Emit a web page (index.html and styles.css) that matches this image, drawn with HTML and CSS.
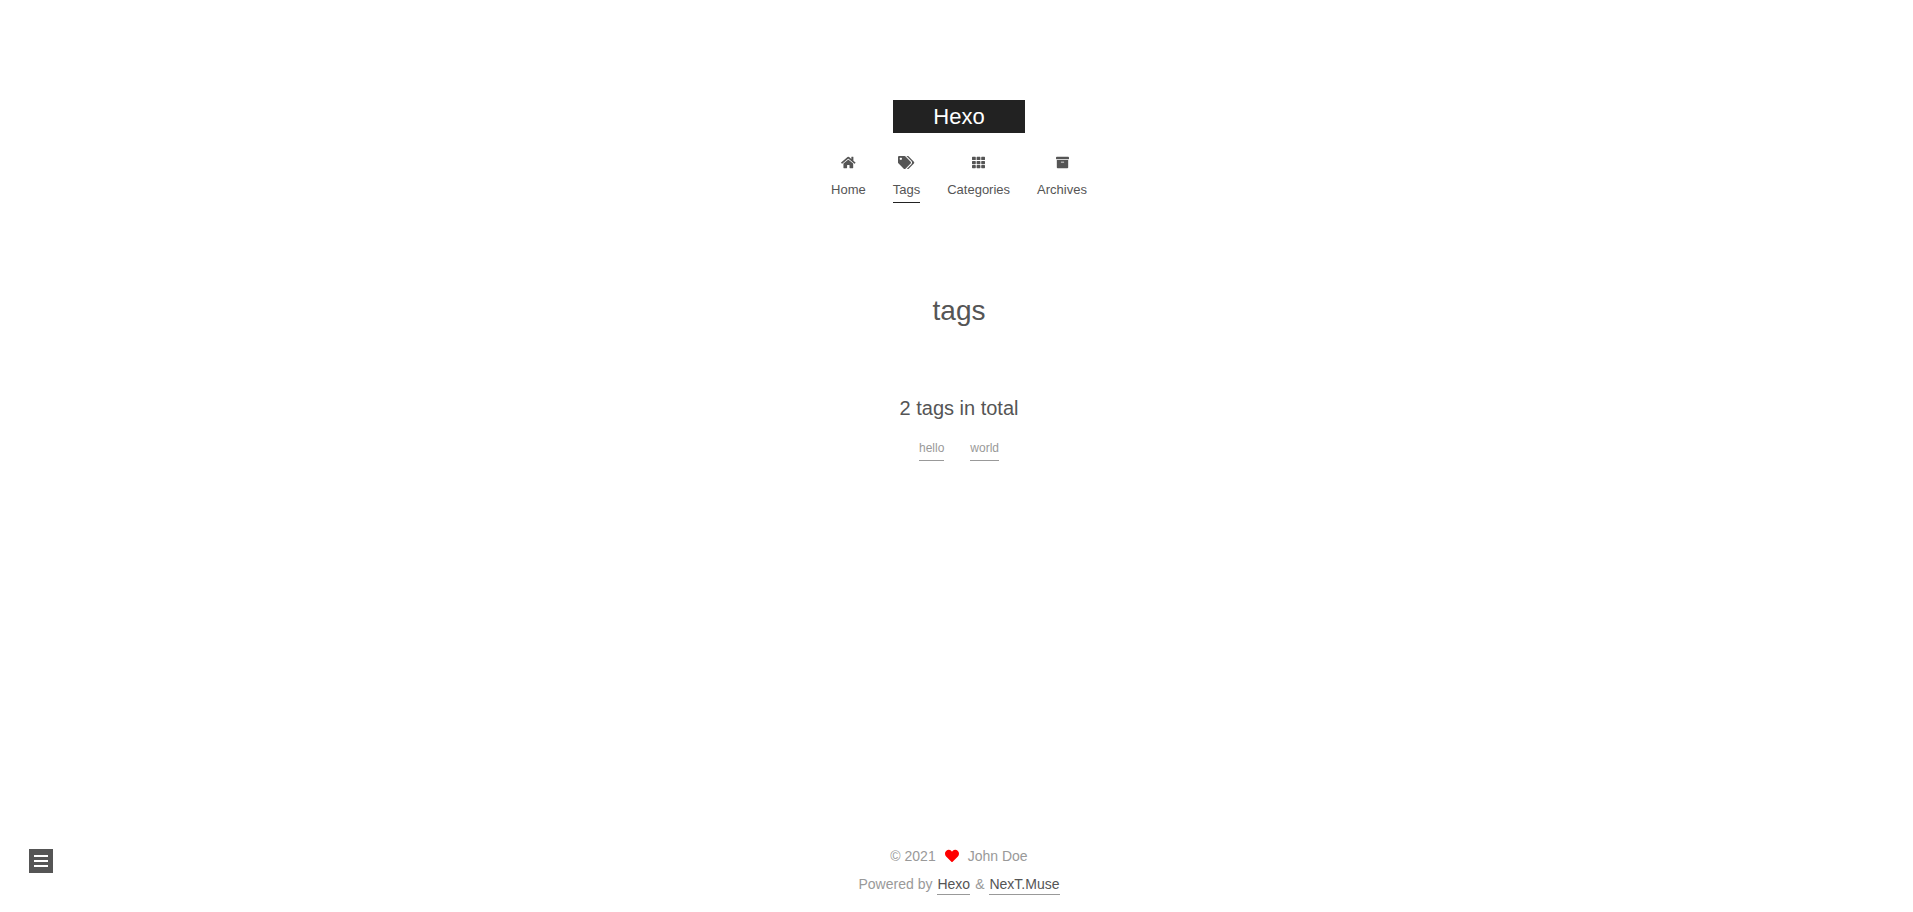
FILE: index.html
```html
<!DOCTYPE html>
<html lang="en">
<head>
<meta charset="utf-8">
<meta name="viewport" content="width=device-width, initial-scale=1">
<title>tags | Hexo</title>
<link rel="stylesheet" href="styles.css">
</head>
<body>
<header class="header">
  <a class="brand" href="#">Hexo</a>
  <nav class="menu" aria-label="Main">
    <a class="menu-item" href="#">
      <svg class="icon icon-home" viewBox="0 0 576 512" aria-hidden="true"><path d="M280.37 148.26L96 300.11V464a16 16 0 0 0 16 16l112.06-.29a16 16 0 0 0 15.92-16V368a16 16 0 0 1 16-16h64a16 16 0 0 1 16 16v95.64a16 16 0 0 0 16 16.05L464 480a16 16 0 0 0 16-16V300L295.67 148.26a12.19 12.19 0 0 0-15.3 0zM571.6 251.47L488 182.56V44.05a12 12 0 0 0-12-12h-56a12 12 0 0 0-12 12v72.61L318.47 43a48 48 0 0 0-61 0L4.34 251.47a12 12 0 0 0-1.6 16.9l25.5 31A12 12 0 0 0 45.15 301l235.22-193.74a12.19 12.19 0 0 1 15.3 0L530.9 301a12 12 0 0 0 16.9-1.6l25.5-31a12 12 0 0 0-1.7-16.93z"/></svg>
      <span class="menu-label">Home</span>
    </a>
    <a class="menu-item menu-item-active" href="#" aria-current="page">
      <svg class="icon icon-tags" viewBox="0 0 640 512" aria-hidden="true"><path d="M497.941 225.941L286.059 14.059A48 48 0 0 0 252.118 0H48C21.49 0 0 21.49 0 48v204.118a48 48 0 0 0 14.059 33.941l211.882 211.882c18.744 18.745 49.136 18.746 67.882 0l204.118-204.118c18.745-18.745 18.745-49.137 0-67.882zM112 160c-26.51 0-48-21.49-48-48s21.49-48 48-48 48 21.49 48 48-21.49 48-48 48zm513.941 133.823L421.823 497.941c-18.745 18.745-49.137 18.745-67.882 0l-.36-.36L527.64 323.522c16.999-16.999 26.36-39.6 26.36-63.64s-9.362-46.641-26.36-63.64L331.397 0h48.721a48 48 0 0 1 33.941 14.059l211.882 211.882c18.745 18.745 18.745 49.137 0 67.882z"/></svg>
      <span class="menu-label">Tags</span>
    </a>
    <a class="menu-item" href="#">
      <svg class="icon icon-grid" viewBox="0 0 512 512" aria-hidden="true"><path d="M149.333 56v80c0 13.255-10.745 24-24 24H24c-13.255 0-24-10.745-24-24V56c0-13.255 10.745-24 24-24h101.333c13.255 0 24 10.745 24 24zm181.334 240v-80c0-13.255-10.745-24-24-24H205.333c-13.255 0-24 10.745-24 24v80c0 13.255 10.745 24 24 24h101.333c13.256 0 24.001-10.745 24.001-24zm32-240v80c0 13.255 10.745 24 24 24H488c13.255 0 24-10.745 24-24V56c0-13.255-10.745-24-24-24H386.667c-13.255 0-24 10.745-24 24zm-32 80V56c0-13.255-10.745-24-24-24H205.333c-13.255 0-24 10.745-24 24v80c0 13.255 10.745 24 24 24h101.333c13.256 0 24.001-10.745 24.001-24zm-205.334 56H24c-13.255 0-24 10.745-24 24v80c0 13.255 10.745 24 24 24h101.333c13.255 0 24-10.745 24-24v-80c0-13.255-10.745-24-24-24zM0 376v80c0 13.255 10.745 24 24 24h101.333c13.255 0 24-10.745 24-24v-80c0-13.255-10.745-24-24-24H24c-13.255 0-24 10.745-24 24zm386.667-56H488c13.255 0 24-10.745 24-24v-80c0-13.255-10.745-24-24-24H386.667c-13.255 0-24 10.745-24 24v80c0 13.255 10.745 24 24 24zm0 160H488c13.255 0 24-10.745 24-24v-80c0-13.255-10.745-24-24-24H386.667c-13.255 0-24 10.745-24 24v80c0 13.255 10.745 24 24 24zM181.333 376v80c0 13.255 10.745 24 24 24h101.333c13.255 0 24-10.745 24-24v-80c0-13.255-10.745-24-24-24H205.333c-13.255 0-24 10.745-24 24z"/></svg>
      <span class="menu-label">Categories</span>
    </a>
    <a class="menu-item" href="#">
      <svg class="icon icon-archive" viewBox="0 0 512 512" aria-hidden="true"><path d="M32 448c0 17.7 14.3 32 32 32h384c17.7 0 32-14.3 32-32V160H32v288zm160-212c0-6.6 5.4-12 12-12h104c6.6 0 12 5.4 12 12v8c0 6.6-5.4 12-12 12H204c-6.6 0-12-5.4-12-12v-8zM480 32H32C14.3 32 0 46.3 0 64v48c0 8.8 7.2 16 16 16h480c8.8 0 16-7.2 16-16V64c0-17.7-14.3-32-32-32z"/></svg>
      <span class="menu-label">Archives</span>
    </a>
  </nav>
</header>
<main class="main">
  <h1 class="page-title">tags</h1>
  <p class="tag-total">2 tags in total</p>
  <div class="tag-cloud">
    <a class="tag" href="#">hello</a>
    <a class="tag" href="#">world</a>
  </div>
</main>
<footer class="footer">
  <div class="footer-row copyright">
    <span>© 2021</span>
    <svg class="icon icon-heart" viewBox="0 0 512 512" aria-hidden="true"><path d="M462.3 62.6C407.5 15.9 326 24.3 275.7 76.2L256 96.5l-19.7-20.3C186.1 24.3 104.5 15.9 49.7 62.6c-62.8 53.6-66.1 149.8-9.9 207.9l193.5 199.8c12.5 12.9 32.8 12.9 45.3 0l193.5-199.8c56.3-58.1 53-154.3-9.8-207.9z"/></svg>
    <span>John Doe</span>
  </div>
  <div class="footer-row">
    <span>Powered by</span>
    <a class="footer-link" href="#">Hexo</a>
    <span>&amp;</span>
    <a class="footer-link" href="#">NexT.Muse</a>
  </div>
</footer>
<button class="sidebar-toggle" type="button" aria-label="Toggle sidebar">
  <span class="toggle-line"></span>
  <span class="toggle-line"></span>
  <span class="toggle-line"></span>
</button>
</body>
</html>
```
FILE: styles.css
```css
* {
  box-sizing: border-box;
}

body {
  display: flex;
  flex-direction: column;
  min-height: 100vh;
  margin: 0;
  padding-left: 5px;
  background: #fff;
  color: #555;
  font-family: "Liberation Sans", Arial, sans-serif;
  font-size: 14px;
}

a {
  color: #555;
  text-decoration: none;
}

.header {
  display: flex;
  flex-direction: column;
  align-items: center;
  padding-top: 100px;
}

.brand {
  padding: 0 40px;
  background: #222;
  color: #fff;
  font-size: 22px;
  line-height: 33px;
}

.menu {
  display: flex;
  flex-wrap: wrap;
  justify-content: center;
  gap: 27px;
  margin-top: 20px;
}

.menu-item {
  display: flex;
  flex-direction: column;
  align-items: center;
  gap: 10px;
  border-bottom: 1px solid transparent;
  font-size: 13px;
}

.menu-item-active {
  border-bottom-color: #222;
}

.menu-label {
  line-height: 22px;
  padding-bottom: 1px;
}

.icon {
  display: block;
  height: 14px;
  fill: currentColor;
}

.menu-item .icon {
  height: 13px;
  margin-top: 3px;
}

.main {
  flex: 1;
  display: flex;
  flex-direction: column;
  align-items: center;
}

.page-title {
  margin: 87px 0 0;
  font-size: 28px;
  font-weight: 400;
  line-height: 42px;
}

.tag-total {
  margin: 57px 0 0;
  font-size: 20px;
  line-height: 38px;
}

.tag-cloud {
  display: flex;
  gap: 26px;
  margin-top: 9px;
}

.tag {
  border-bottom: 1px solid #999;
  color: #999;
  font-size: 12px;
  line-height: 24px;
}

.footer {
  padding-bottom: 14px;
  color: #999;
}

.footer-row {
  display: flex;
  justify-content: center;
  align-items: center;
  gap: 5px;
  height: 28px;
}

.copyright {
  gap: 9px;
}

.icon-heart {
  fill: #f00;
}

.footer-link {
  border-bottom: 1px solid #999;
  line-height: 20px;
  margin-top: 1px;
}

.sidebar-toggle {
  position: fixed;
  bottom: 39px;
  left: 29px;
  display: flex;
  flex-direction: column;
  align-items: center;
  justify-content: center;
  gap: 3px;
  width: 24px;
  height: 24px;
  padding: 0;
  border: 0;
  background: #555;
}

.toggle-line {
  width: 14px;
  height: 2px;
  background: #fff;
}
```
